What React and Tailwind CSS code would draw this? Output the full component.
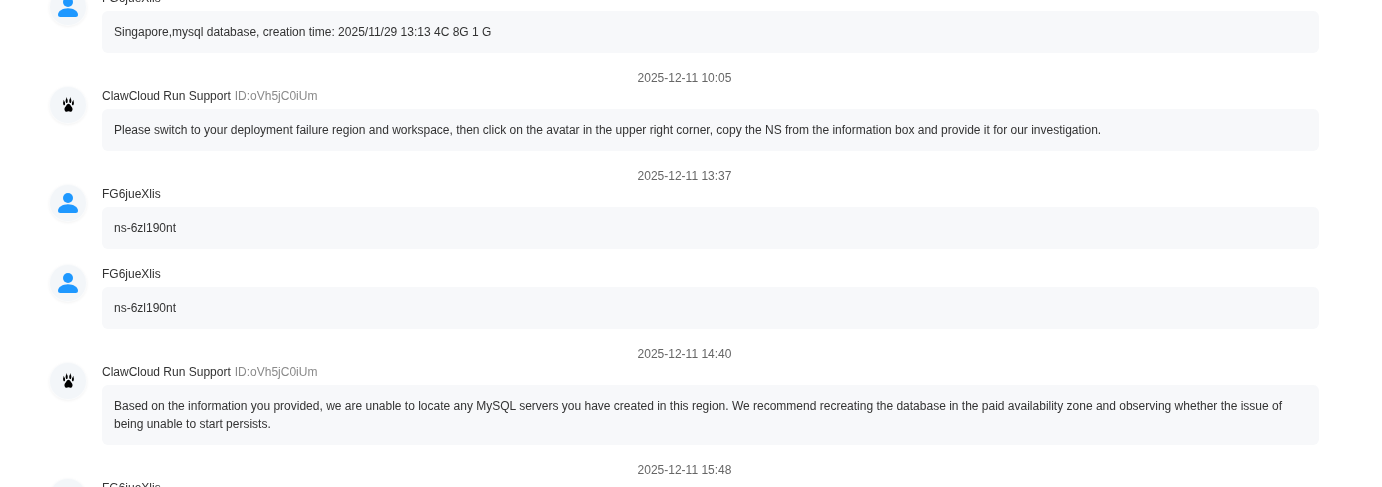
const FONT = "font-['Liberation_Sans',Arial,sans-serif]";

function Paw() {
  return (
    <svg width="11" height="15" viewBox="0 0 12 15" preserveAspectRatio="none" fill="#000" className="-mt-px" aria-hidden="true">
      <path d="M6 6.800c-1.300 0-2 1-2.500 2C2.800 9.900 1.600 10.600 1.600 12.200c0 1.400 1 2.600 2.200 2.600.8 0 1.400-.6 2.200-.6s1.400.6 2.200.6c1.200 0 2.200-1.200 2.200-2.600 0-1.600-1.200-2.300-1.900-3.400-.5-1-1.200-2-2.500-2z" />
      <path d="M3.900 0 3.500 1.800C2.800 2.700 2.700 4.500 3.200 5.500c.4.700 1.300.7 1.700 0 .5-1 .3-2.800-.4-3.700L3.900 0z" />
      <path d="M8.100 0l.4 1.800c.7.9.8 2.700.3 3.700-.4.700-1.300.7-1.700 0-.5-1-.3-2.800.4-3.700L8.100 0z" />
      <path d="M.6 2.700.5 4.300C-.1 5.200 0 7 .6 7.900c.4.600 1.200.5 1.500-.2.400-1 .1-2.500-.6-3.400L.6 2.700z" />
      <path d="M11.400 2.700l.1 1.600c.6.900.5 2.700-.1 3.600-.4.600-1.200.5-1.500-.2-.4-1-.1-2.500.6-3.400l.9-1.600z" />
    </svg>
  );
}

function Person() {
  return (
    <svg width="20" height="20" viewBox="0 0 20 20" fill="#1e98ff" aria-hidden="true">
      <circle cx="10" cy="5" r="5" />
      <path d="M0 17.800C0 14 4.500 11.200 10 11.200s10 2.800 10 6.600c0 1.400-.9 2.200-2.200 2.200H2.200C.9 20 0 19.200 0 17.800z" />
    </svg>
  );
}

function Message({ name, id, support, children }) {
  return (
    <div className="flex gap-4 mb-4">
      <div className="w-9 h-9 shrink-0 rounded-full bg-[#f3f6f9] shadow-[0_0_0_1px_#fafbfc,0_1px_3px_1px_rgba(0,0,0,0.05)] flex items-center justify-center">
        {support ? <Paw /> : <Person />}
      </div>
      <div className="flex-1 min-w-0">
        <div className="h-[18px] leading-[18px] mb-1 text-[#333333]">
          {name}
          {id && <span className="ml-1 text-[#8a8a8a]">{id}</span>}
        </div>
        <div className="bg-[#f7f8fa] rounded-md px-3 py-3 leading-[18px] text-[#333333]">{children}</div>
      </div>
    </div>
  );
}

function Time({ children }) {
  return <div className="h-[18px] leading-[18px] text-center text-[#666666]">{children}</div>;
}

export default function App() {
  const support = { name: "ClawCloud Run Support", id: "ID:oVh5jC0iUm", support: true };
  const user = { name: "FG6jueXlis" };
  return (
    <div className={`h-[487px] overflow-hidden bg-white text-xs ${FONT}`}>
      <div className="ml-[50px] w-[1269px] -mt-[11px] will-change-transform">
        <Message {...user}>Singapore,mysql database, creation time: 2025/11/29 13:13 4C 8G 1 G</Message>
        <Time>2025-12-11 10:05</Time>
        <Message {...support}>
          Please switch to your deployment failure region and workspace, then click on the avatar in the upper right corner, copy the NS from the information box and provide it for our investigation.
        </Message>
        <Time>2025-12-11 13:37</Time>
        <Message {...user}>ns-6zl190nt</Message>
        <Message {...user}>ns-6zl190nt</Message>
        <Time>2025-12-11 14:40</Time>
        <Message {...support}>
          Based on the information you provided, we are unable to locate any MySQL servers you have created in this region. We recommend recreating the database in the paid availability zone and observing whether the issue of being unable to start persists.
        </Message>
        <Time>2025-12-11 15:48</Time>
        <Message {...user}>ns-6zl190nt</Message>
      </div>
    </div>
  );
}
